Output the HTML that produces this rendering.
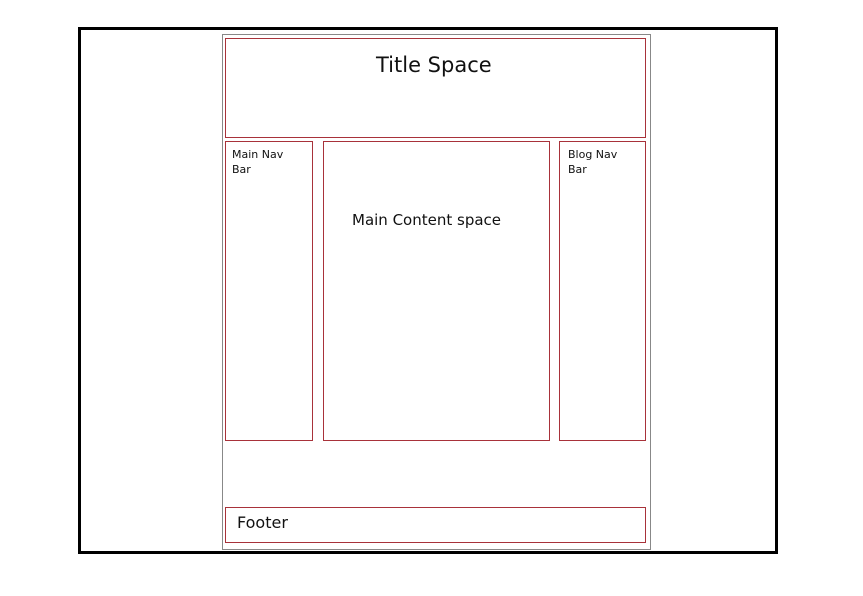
<!DOCTYPE html>
<html><head><style>
body{margin:0;width:863px;height:596px;background:#fff;position:relative;font-family:"DejaVu Sans","Liberation Sans",sans-serif;color:#111;overflow:hidden}
div{position:absolute;box-sizing:border-box}
.r{box-shadow:inset 0 0 0 1px #a8323a}
</style></head><body>
<div style="left:78px;top:27px;width:700px;height:527px;border:3px solid #000"></div>
<div style="left:222px;top:34px;width:429px;height:516px;border:1px solid #888"></div>
<div class="r" style="left:225px;top:38px;width:421px;height:100px"><span style="position:absolute;left:151px;top:15px;font-size:21px">Title Space</span></div>
<div class="r" style="left:225px;top:141px;width:88px;height:300px"><span style="position:absolute;left:7px;top:6px;font-size:11px;line-height:15px">Main Nav<br>Bar</span></div>
<div class="r" style="left:323px;top:141px;width:227px;height:300px"><span style="position:absolute;left:29px;top:70px;font-size:15px">Main Content space</span></div>
<div class="r" style="left:559px;top:141px;width:87px;height:300px"><span style="position:absolute;left:9px;top:6px;font-size:11px;line-height:15px">Blog Nav<br>Bar</span></div>
<div class="r" style="left:225px;top:507px;width:421px;height:36px"><span style="position:absolute;left:12px;top:6px;font-size:16px">Footer</span></div>
</body></html>
